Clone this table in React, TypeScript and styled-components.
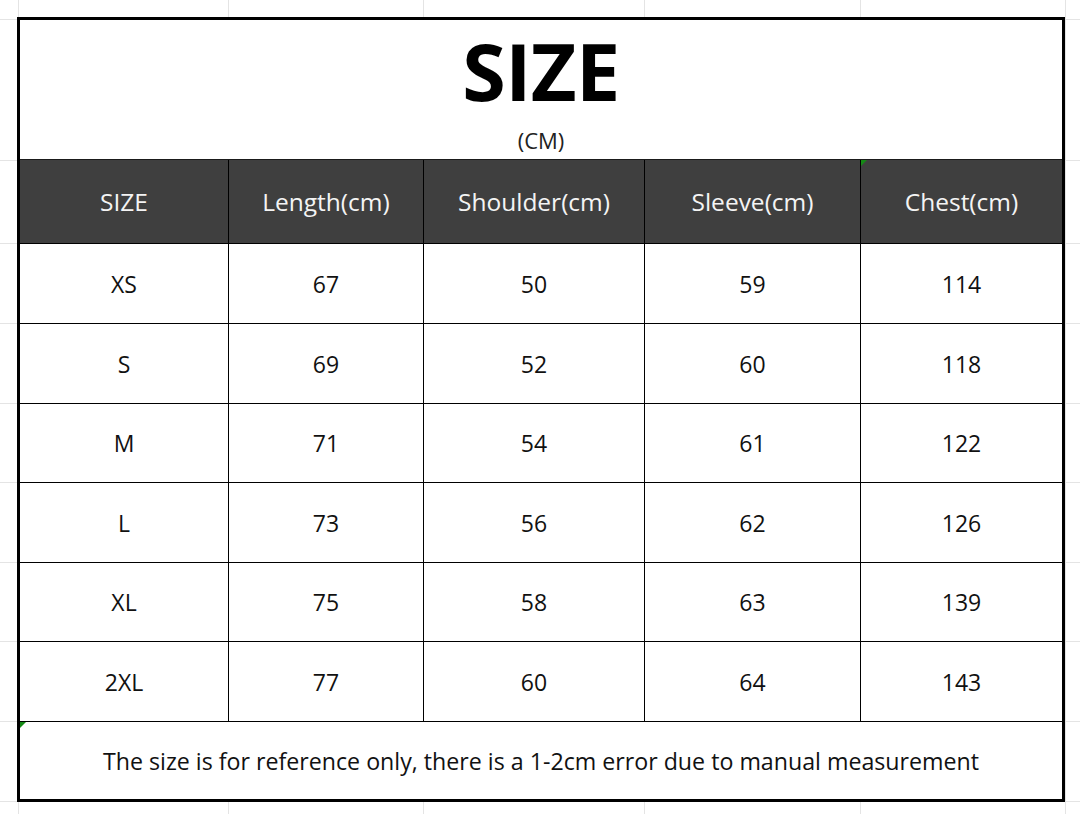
import React from "react";
import styled, { createGlobalStyle, css } from "styled-components";

const GlobalStyle = createGlobalStyle`
  html, body { margin: 0; padding: 0; background: #fff; }
  body { font-family: "Open Sans", "Noto Sans", Arial, sans-serif; }
`;

const GRID = "#e4e4e4";
const vLines = [18, 228, 423, 644, 860, 1065];
const hLines = [19, 160, 243, 323, 403, 482, 562, 641, 721, 801];

const gridBg = [
  ...vLines.map((x) => `linear-gradient(${GRID}, ${GRID}) ${x}px 0 / 1px 100% no-repeat`),
  ...hLines.map((y) => `linear-gradient(${GRID}, ${GRID}) 0 ${y}px / 100% 1px no-repeat`),
].join(", ");

const Sheet = styled.div`
  width: 1080px;
  height: 814px;
  box-sizing: border-box;
  padding: 17px 0 0 17px;
  background: ${gridBg}, #fff;
  overflow: hidden;
`;

const Table = styled.div`
  width: 1048px;
  box-sizing: border-box;
  border: 3px solid #000;
  background: #fff;
  display: grid;
  grid-template-columns: 209px 195px 221px 216px 201px;
  grid-template-rows: 140px 84px 80px 80px 79px 80px 79px 80px 77px;
`;

const TitleBlock = styled.div`
  grid-column: 1 / -1;
  box-sizing: border-box;
  border-bottom: 1px solid #1a1a1a;
  display: flex;
  flex-direction: column;
  align-items: center;
  padding-top: 11px;
`;

const Title = styled.div`
  font-size: 79px;
  font-weight: 700;
  line-height: 1;
  color: #000;
  letter-spacing: -0.5px;
`;

const Unit = styled.div`
  margin-top: 19px;
  font-size: 22px;
  line-height: 1;
  color: #222;
`;

const Cell = styled.div<{ $head?: boolean; $last?: boolean; $bottom?: boolean; $flag?: boolean }>`
  position: relative;
  box-sizing: border-box;
  display: flex;
  align-items: center;
  justify-content: center;
  font-size: 23px;
  color: #111;
  border-right: ${(p) => (p.$last ? "none" : "1px solid #000")};
  border-bottom: ${(p) => (p.$bottom ? "none" : "1px solid #000")};
  ${(p) =>
    p.$head &&
    css`
      background: #3f3f3f;
      color: #f4f4f4;
      font-size: 24.5px;
    `}
  ${(p) =>
    p.$flag &&
    css`
      &::before {
        content: "";
        position: absolute;
        top: 0;
        left: 0;
        border-top: 6px solid #158a15;
        border-right: 6px solid transparent;
      }
    `}
`;

const Footer = styled(Cell)`
  grid-column: 1 / -1;
  font-size: 23.2px;
`;

const headers = ["SIZE", "Length(cm)", "Shoulder(cm)", "Sleeve(cm)", "Chest(cm)"];
const rows: (string | number)[][] = [
  ["XS", 67, 50, 59, 114],
  ["S", 69, 52, 60, 118],
  ["M", 71, 54, 61, 122],
  ["L", 73, 56, 62, 126],
  ["XL", 75, 58, 63, 139],
  ["2XL", 77, 60, 64, 143],
];

export default function App() {
  return (
    <>
      <GlobalStyle />
      <Sheet>
        <Table>
          <TitleBlock>
            <Title>SIZE</Title>
            <Unit>(CM)</Unit>
          </TitleBlock>
          {headers.map((h, i) => (
            <Cell key={h} $head $last={i === headers.length - 1} $flag={i === 4}>
              {h}
            </Cell>
          ))}
          {rows.map((r) =>
            r.map((v, i) => (
              <Cell key={`${r[0]}-${i}`} $last={i === r.length - 1}>
                {v}
              </Cell>
            ))
          )}
          <Footer $last $bottom $flag>
            The size is for reference only, there is a 1-2cm error due to manual measurement
          </Footer>
        </Table>
      </Sheet>
    </>
  );
}
